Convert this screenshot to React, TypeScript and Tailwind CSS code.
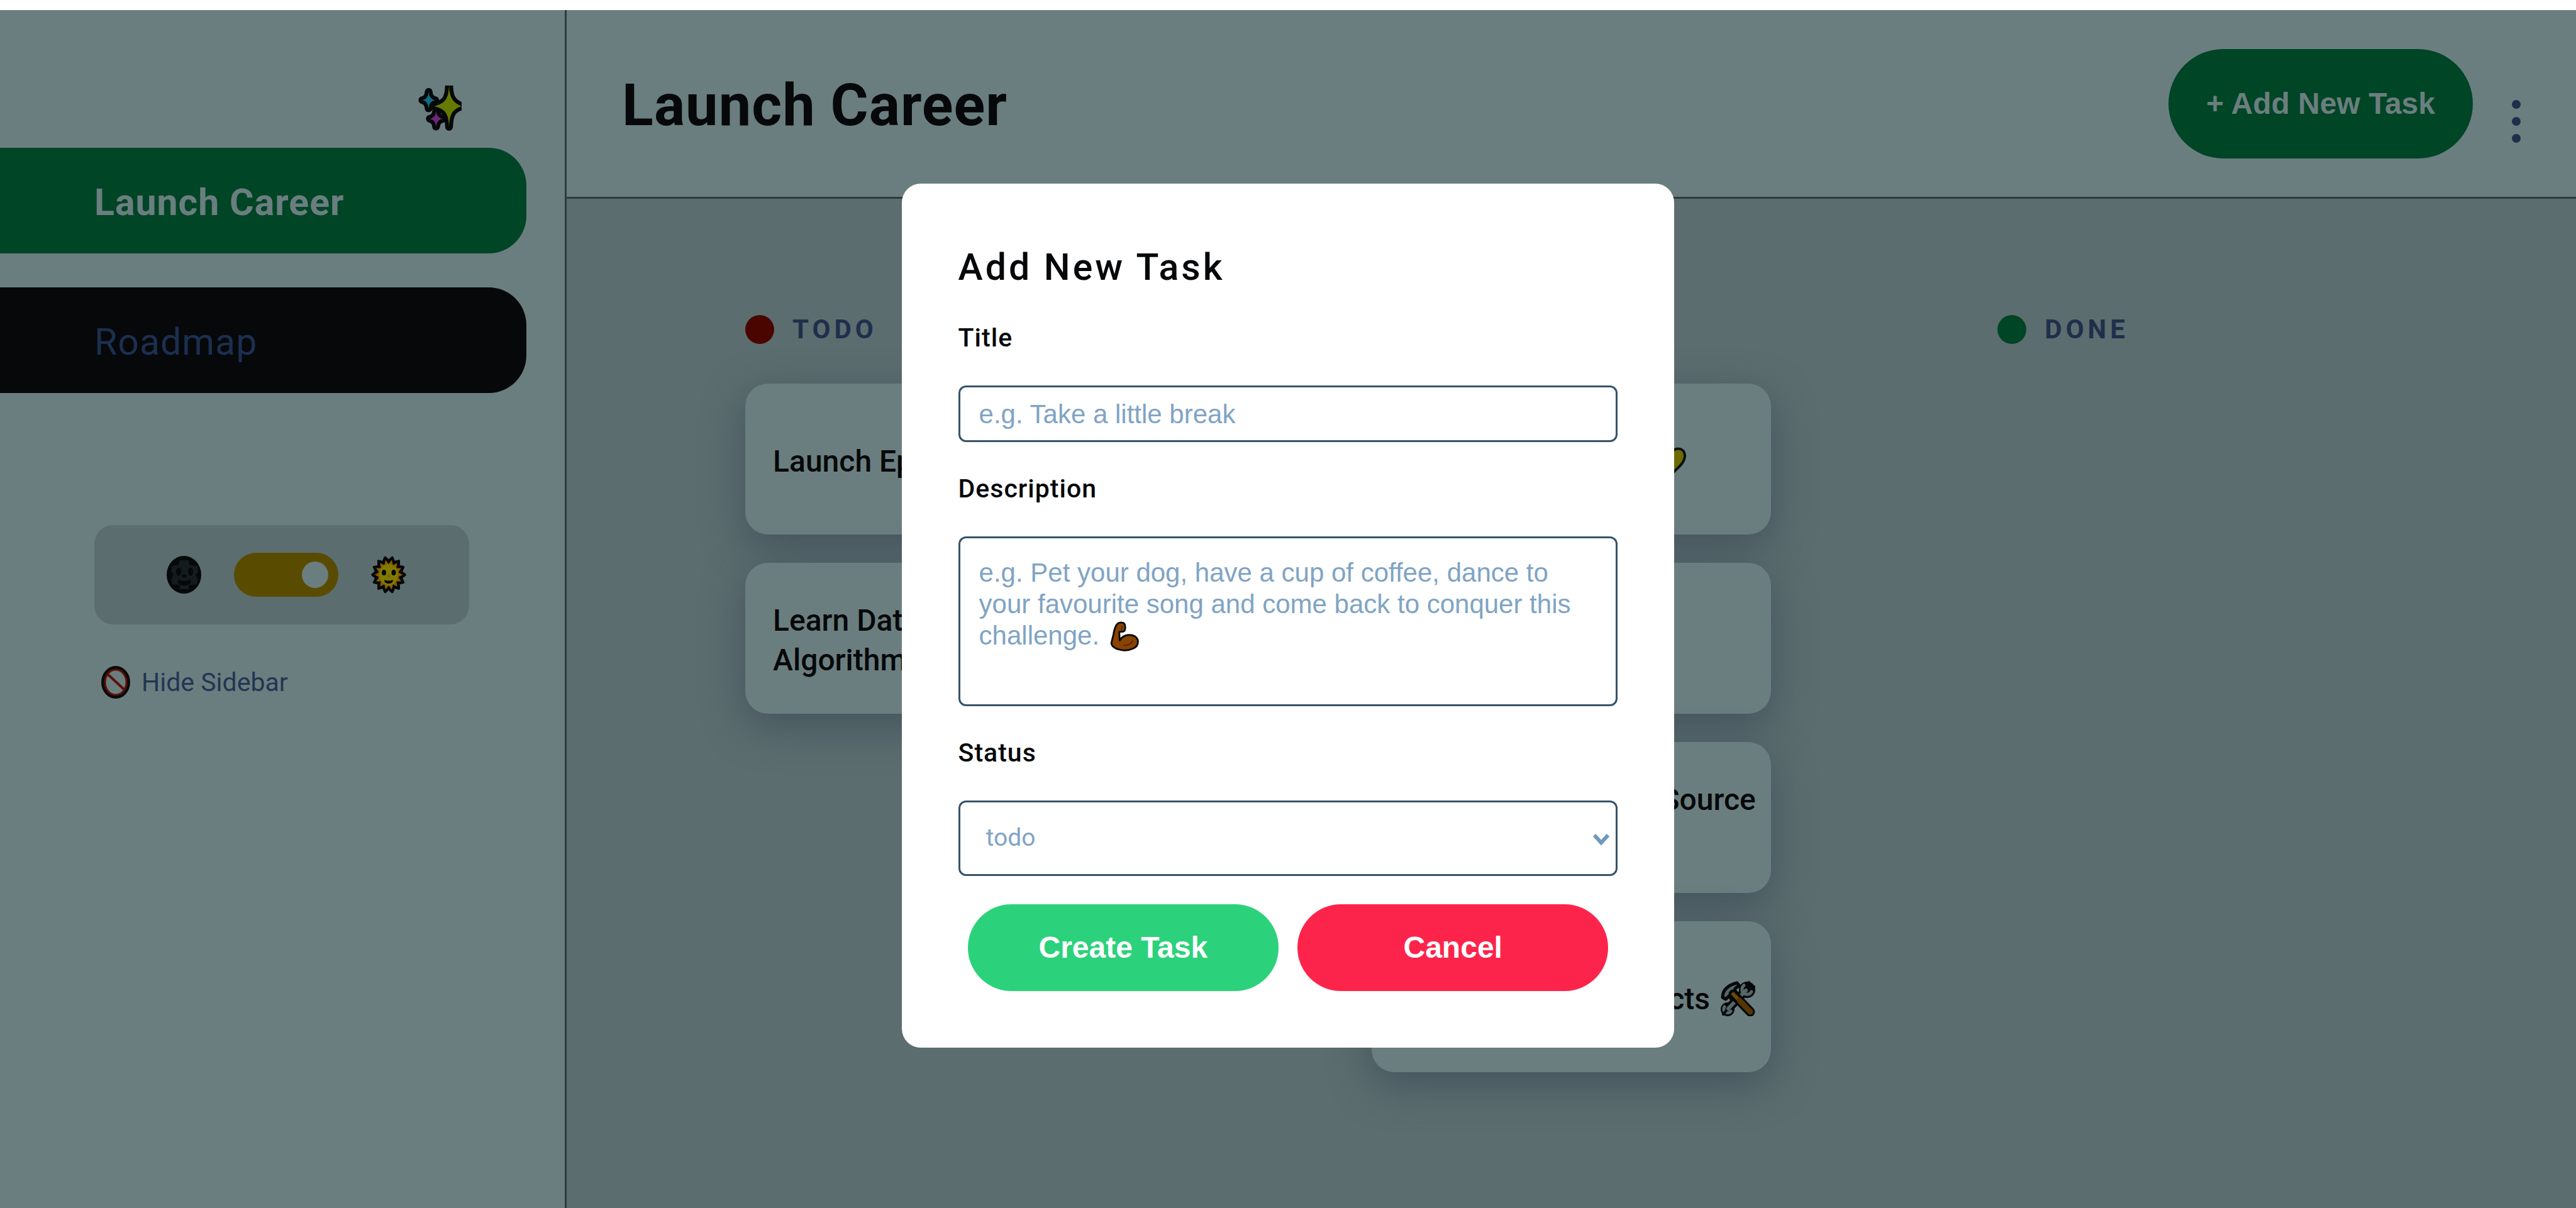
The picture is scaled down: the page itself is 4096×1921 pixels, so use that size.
import React from "react";

type Card = { title: string; icon?: React.ReactNode };
type Column = { name: string; dot: string; cards: Card[] };

function Sparkles() {
  const big = "M281 40C283 115 287 160 365 194C300 215 284 250 281 332C278 250 262 212 180 194C262 172 279 140 281 40Z";
  const blue = "M144 98Q148 148 188 153Q148 158 144 208Q140 158 102 153Q140 148 144 98Z";
  const pink = "M194 228Q198 272 238 278Q198 284 194 330Q190 284 152 278Q190 272 194 228Z";
  return (
    <svg viewBox="70 55 295 303" className="h-[72px] w-[70px]" aria-hidden="true">
      <g fill="#06080a" stroke="#06080a" strokeWidth="52" strokeLinejoin="round">
        <path d={big} />
        <path d={blue} />
        <path d={pink} />
      </g>
      <path d={big} fill="#667a00" />
      <path d={blue} fill="#0b6f82" />
      <path d={pink} fill="#6e2877" />
    </svg>
  );
}

function Moon() {
  return (
    <svg viewBox="0 0 55 60" className="h-[60px] w-[55px]" aria-hidden="true">
      <ellipse cx="27.5" cy="30" rx="27.5" ry="30" fill="#06080a" />
      <path
        d="M21 7H35L36 14L44 16L49 16L50 26L46 30L50 38L48 45L39 46L35 47V53H21V47L16 46L9 45L7 38L11 30L7 24L9 16L19 14Z"
        fill="#141b1d"
      />
      <ellipse cx="19" cy="25" rx="4" ry="6.5" fill="#06080a" />
      <ellipse cx="38" cy="25" rx="4" ry="6.5" fill="#06080a" />
      <ellipse cx="28" cy="32" rx="4" ry="2.5" fill="#06080a" />
      <path d="M19 39Q28 43 37 39Q39 46 28 46Q17 46 19 39Z" fill="#06080a" stroke="#06080a" strokeWidth="2" />
    </svg>
  );
}

function star(count: number, outer: number, inner: number) {
  const points: string[] = [];
  for (let i = 0; i < count * 2; i++) {
    const r = i % 2 === 0 ? outer : inner;
    const a = (Math.PI * (i + 1)) / count - Math.PI / 2;
    points.push(`${(28 + r * 0.92 * Math.cos(a)).toFixed(1)},${(30 + r * Math.sin(a)).toFixed(1)}`);
  }
  return points.join(" ");
}

function Sun() {
  return (
    <svg viewBox="0 0 56 60" className="h-[60px] w-[56px]" aria-hidden="true">
      <polygon points={star(14, 28, 22)} fill="#06080a" stroke="#06080a" strokeWidth="4" strokeLinejoin="round" />
      <polygon points={star(14, 24, 17)} fill="#8a5a00" />
      <ellipse cx="28" cy="30" rx="15" ry="17" fill="#7f7a00" />
      <ellipse cx="20.500" cy="26.500" rx="3.500" ry="4.500" fill="#06080a" />
      <ellipse cx="36" cy="26.500" rx="3.500" ry="4.500" fill="#06080a" />
      <ellipse cx="28" cy="32" rx="3" ry="2" fill="#915c00" />
      <path d="M21 38Q28 41 35 38Q35 44 28 44Q21 44 21 38Z" fill="#06080a" />
    </svg>
  );
}

function Prohibited() {
  return (
    <svg viewBox="0 0 46 52" className="h-[52px] w-[46px]" aria-hidden="true">
      <ellipse cx="23" cy="26" rx="20.500" ry="23.500" fill="none" stroke="#0b0a0b" strokeWidth="5" />
      <path d="M10 13L37 38" stroke="#5d1008" strokeWidth="4" />
      <ellipse cx="23" cy="26" rx="17" ry="20" fill="none" stroke="#5d1008" strokeWidth="3" />
    </svg>
  );
}

function Arm() {
  return (
    <svg viewBox="65 62 205 205" className="h-[49px] w-[49px]" aria-hidden="true">
      <path
        d="M112 86Q122 70 146 70Q170 72 170 98Q172 126 158 130L132 132Q130 150 134 190Q150 158 190 153Q240 150 254 186Q260 226 226 242Q180 264 130 250Q84 238 78 210Q84 180 92 150Q98 110 112 86Z"
        fill="#8a4200"
        stroke="#0b0b0b"
        strokeWidth="12"
        strokeLinejoin="round"
      />
      <path d="M160 222Q206 222 220 192M148 96Q152 106 144 116" fill="none" stroke="#4a2200" strokeWidth="7" strokeLinecap="round" />
    </svg>
  );
}

function Heart() {
  return (
    <svg viewBox="0 0 50 50" className="h-[50px] w-[50px] shrink-0" aria-hidden="true">
      <path
        d="M25 13C21 3 3 2 3 17C3 29 17 38 25 47C33 38 47 29 47 17C47 2 29 3 25 13Z"
        fill="#6d6a00"
        stroke="#0b0f0f"
        strokeWidth="4"
      />
    </svg>
  );
}

function Tools() {
  return (
    <svg viewBox="0 0 56 56" className="h-[56px] w-[56px] shrink-0" aria-hidden="true">
      <g fill="none" strokeLinecap="round" strokeLinejoin="round">
        <path d="M12 45L42 14" stroke="#06080a" strokeWidth="14" />
        <circle cx="12" cy="45" r="11" fill="#06080a" />
        <circle cx="43" cy="14" r="13" fill="#06080a" />
        <path d="M13 44L41 15" stroke="#56676a" strokeWidth="6" />
        <path d="M7 41A6 6 0 1 0 17 48M38 7A8 8 0 1 0 50 17" stroke="#56676a" strokeWidth="5" />
        <path d="M46 2L43 10L46 12L54 9M5 53L10 47" stroke="#06080a" strokeWidth="4" />
        <path d="M4 26Q4 9 27 3L31 8Q24 10 23 15L28 20L18 29L14 24L9 29Z" fill="#56676a" stroke="#06080a" strokeWidth="5" />
        <path d="M21 21L48 49" stroke="#06080a" strokeWidth="15" />
        <path d="M21 21L32 32" stroke="#6a4a05" strokeWidth="6" />
        <path d="M31 31L48 49" stroke="#553500" strokeWidth="9" />
      </g>
    </svg>
  );
}

const columns: Column[] = [
  {
    name: "TODO",
    dot: "bg-[#4b0500]",
    cards: [{ title: "Launch Epic Career" }, { title: "Learn Data Structures & Algorithms" }],
  },
  {
    name: "DOING",
    dot: "bg-[#594c00]",
    cards: [
      { title: "Master JavaScript", icon: <Heart /> },
      { title: "Learn React" },
      { title: "Contribute to Open Source Projects" },
      { title: "Start Portfolio Projects", icon: <Tools /> },
    ],
  },
  { name: "DONE", dot: "bg-[#004526]", cards: [] },
];

function TaskCard({ title, icon }: Card) {
  return (
    <li className="flex h-[240px] items-center gap-4 rounded-[36px] bg-[#6b7e7f] pt-[6px] pr-3 pl-[44px] text-[48px] leading-[63px] font-medium text-[#06080a] shadow-[0_20px_64px_#35425399]">
      <p>{title}</p>
      {icon}
    </li>
  );
}

const fieldBox = "block w-full rounded-[12px] border-[3px] border-[#36536a] bg-white";
const labelText = "block text-[41px] leading-[48px] font-medium tracking-[1px]";

function TaskDialog() {
  return (
    <div className="absolute inset-0 flex items-center justify-center pt-[36px]">
      <form
        role="dialog"
        aria-labelledby="dialog-title"
        onSubmit={(e) => e.preventDefault()}
        className="w-[30%] rounded-[30px] bg-white px-[90px] pt-[101px] pb-[90px] text-[#06080a]"
      >
        <h2 id="dialog-title" className="text-[59px] leading-[64px] font-medium tracking-[4px]">
          Add New Task
        </h2>
        <label htmlFor="title" className={`${labelText} mt-[56px]`}>
          Title
        </label>
        <input
          id="title"
          placeholder="e.g. Take a little break"
          className={`${fieldBox} mt-[52px] h-[90px] px-[30px] pt-[2px] font-['Liberation_Sans',sans-serif] text-[42px] placeholder:text-[#7fa4c4]`}
        />
        <label htmlFor="description" className={`${labelText} mt-[50px]`}>
          Description
        </label>
        <div className="relative mt-[52px]">
          <textarea
            id="description"
            placeholder="e.g. Pet your dog, have a cup of coffee, dance to your favourite song and come back to conquer this challenge."
            className={`${fieldBox} h-[270px] resize-none px-[30px] py-[30px] font-['Liberation_Sans',sans-serif] text-[42px] leading-[50px] placeholder:text-[#7fa4c4]`}
          />
          <span className="absolute top-[135px] left-[240px]">
            <Arm />
          </span>
        </div>
        <label htmlFor="status" className={`${labelText} mt-[50px]`}>
          Status
        </label>
        <div className="relative mt-[52px]">
          <select
            id="status"
            defaultValue="todo"
            className={`${fieldBox} h-[120px] appearance-none pl-[41px] text-[39px] text-[#7fa4c4]`}
          >
            <option>todo</option>
            <option>doing</option>
            <option>done</option>
          </select>
          <svg
            viewBox="0 0 28 20"
            className="pointer-events-none absolute top-[52px] right-[12px] h-[20px] w-[28px]"
            aria-hidden="true"
          >
            <path d="M3 3L14 15L25 3" fill="none" stroke="#7098bd" strokeWidth="6" />
          </svg>
        </div>
        <div className="mt-[45px] flex gap-[30px] px-[15px] font-['Liberation_Sans',sans-serif] text-[48px] font-bold text-white">
          <button type="submit" className="h-[138px] flex-1 rounded-full bg-[#2bd27b]">
            Create Task
          </button>
          <button type="button" className="h-[138px] flex-1 rounded-full bg-[#fd244b]">
            Cancel
          </button>
        </div>
      </form>
    </div>
  );
}

export default function App() {
  return (
    <div className="relative flex min-h-screen flex-col bg-white pt-[16px] font-['Roboto',sans-serif]">
      <div className="flex flex-1">
        <aside className="w-[22%] border-r-[3px] border-[#2e3a3b] bg-[#6b7e7f] pt-[120px]">
          <div className="flex justify-end pr-[164px]">
            <Sparkles />
          </div>
          <nav className="mt-[27px] mr-[61px] flex flex-col gap-[54px] text-[59px] tracking-[1px]">
            <a href="#launch-career" className="flex h-[168px] items-center rounded-r-[60px] bg-[#004526] pt-[6px] pl-[150px] font-bold text-[#6b7e7f]">
              Launch Career
            </a>
            <a href="#roadmap" className="flex h-[168px] items-center rounded-r-[60px] bg-[#06080a] pt-[6px] pl-[150px] text-[#1c2f50]">
              Roadmap
            </a>
          </nav>
          <div className="mt-[210px] mr-[152px] ml-[150px] flex h-[158px] items-center justify-center gap-[52px] rounded-[30px] bg-[#5b6d6e] pl-[14px]">
            <Moon />
            <input
              type="checkbox"
              role="switch"
              aria-label="Light theme"
              defaultChecked
              className="flex h-[70px] w-[166px] appearance-none items-center justify-start rounded-full bg-[#594c00] px-[16px] before:size-[42px] before:rounded-full before:bg-[#6b7e7f] before:content-[''] checked:justify-end"
            />
            <Sun />
          </div>
          <button type="button" className="mt-[66px] ml-[161px] flex items-center gap-[18px] text-[41px] leading-[52px] text-[#223653]">
            <Prohibited />
            Hide Sidebar
          </button>
        </aside>
        <div className="flex flex-1 flex-col">
          <header className="flex h-[300px] items-center border-b-[3px] border-[#2e3a3b] bg-[#6b7e7f] pr-[88px] pl-[88px]">
            <h1 className="pt-[6px] text-[92px] font-bold tracking-[1px] text-[#06080a]">Launch Career</h1>
            <button
              type="button"
              className="ml-auto h-[174px] rounded-full bg-[#004526] px-[60px] font-['Liberation_Sans',sans-serif] text-[48px] font-bold text-[#6b7e7f]"
            >
              + Add New Task
            </button>
            <button type="button" aria-label="Board menu" className="mt-[56px] ml-[62px] flex flex-col gap-[13px]">
              <span className="size-[14px] rounded-full bg-[#1f2f4b]" />
              <span className="size-[14px] rounded-full bg-[#1f2f4b]" />
              <span className="size-[14px] rounded-full bg-[#1f2f4b]" />
            </button>
          </header>
          <main className="grid flex-1 grid-cols-3 gap-[360px] bg-[#5b6d6e] px-[284px] pt-[183px]">
            {columns.map((column) => (
              <section key={column.name}>
                <h2 className="flex items-center gap-[29px] text-[42px] leading-[50px] font-bold tracking-[6px] text-[#1f2f4b]">
                  <span className={`size-[46px] rounded-full ${column.dot}`} />
                  {column.name}
                </h2>
                <ul className="mt-[61px] flex flex-col gap-[45px]">
                  {column.cards.map((card) => (
                    <TaskCard key={card.title} {...card} />
                  ))}
                </ul>
              </section>
            ))}
          </main>
        </div>
      </div>
      <TaskDialog />
    </div>
  );
}
